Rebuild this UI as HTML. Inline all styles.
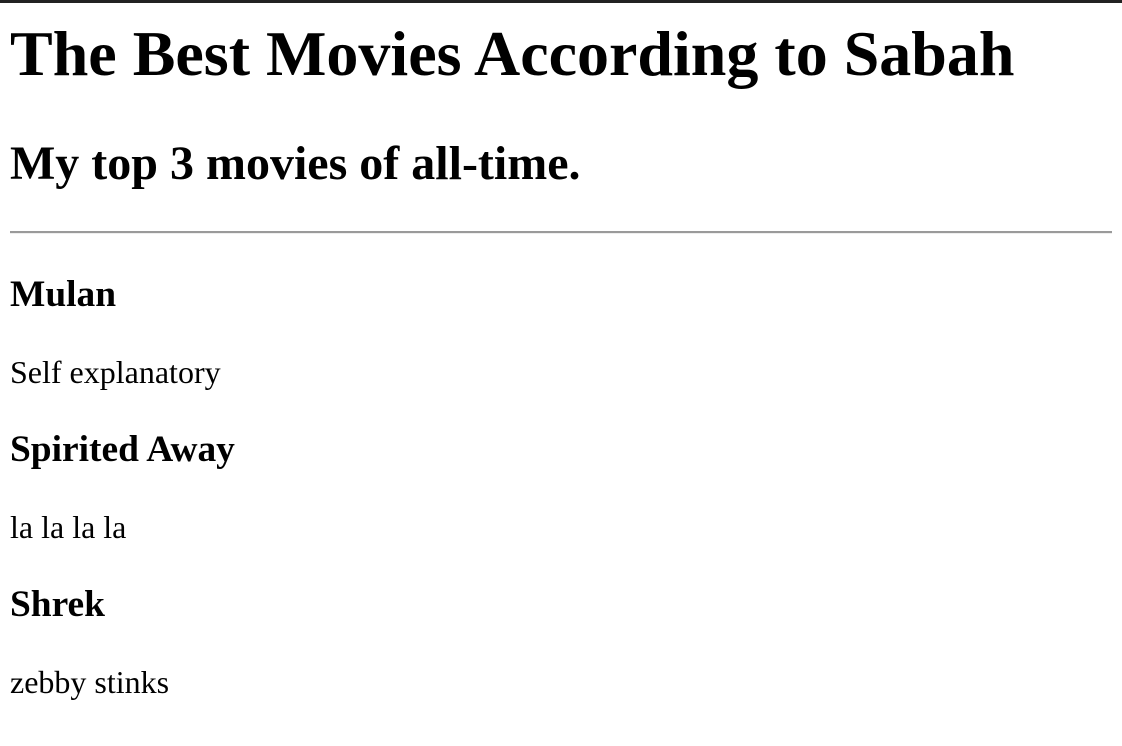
<!DOCTYPE html>
<html><head><meta charset="utf-8"><style>
html,body{margin:0;padding:0;background:#fff;width:1122px;height:746px;overflow:hidden;position:relative;font-family:"Liberation Serif","Times New Roman",serif;color:#000}
.bar{position:absolute;left:0;top:0;width:1122px;height:3px;background:#222}
.t{position:absolute;left:10px;line-height:1;white-space:nowrap;margin:0}
.b{font-weight:bold}
hr{position:absolute;left:10px;top:231px;width:1102px;margin:0;border:0;border-top:2px solid #9a9a9a;border-bottom:1px solid #eee;height:0}
</style></head><body>
<div class="bar"></div>
<div class="t b" style="font-size:64px;top:22px">The Best Movies According to Sabah</div>
<div class="t b" style="font-size:48px;top:140px">My top 3 movies of all-time.</div>
<hr>
<div class="t b" style="font-size:37.44px;top:276px">Mulan</div>
<div class="t" style="font-size:32px;top:355.5px">Self explanatory</div>
<div class="t b" style="font-size:37.44px;top:431px">Spirited Away</div>
<div class="t" style="font-size:32px;top:510.5px">la la la la</div>
<div class="t b" style="font-size:37.44px;top:586px">Shrek</div>
<div class="t" style="font-size:32px;top:665.5px">zebby stinks</div>
</body></html>
